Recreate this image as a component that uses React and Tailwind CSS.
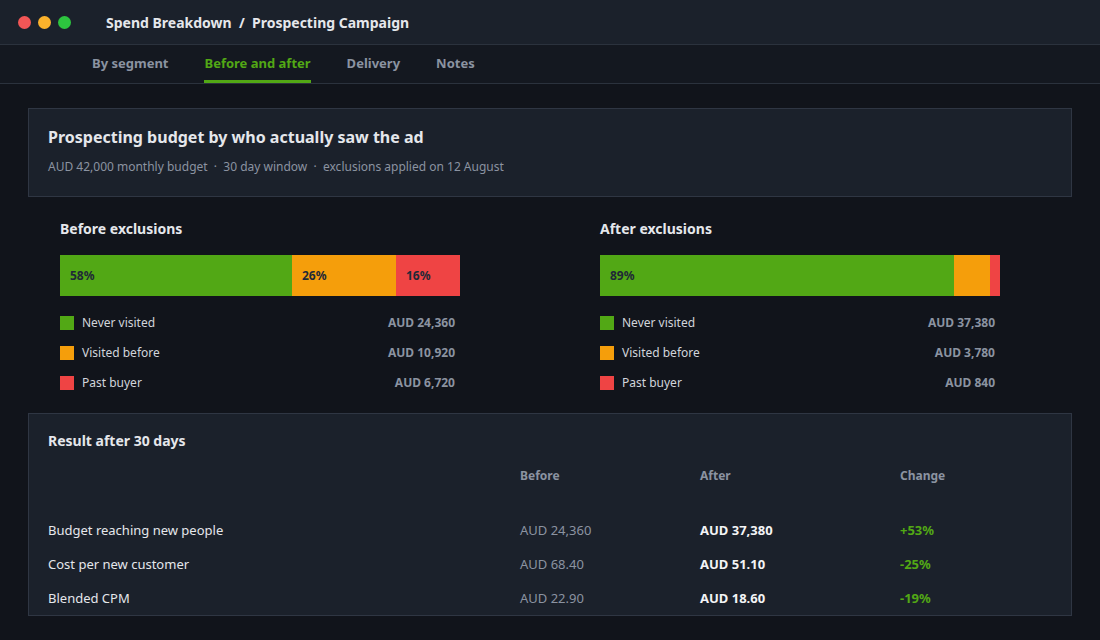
import React from 'react';

const before = [
  { label: 'Never visited', pct: 58, amount: 'AUD 24,360', color: 'bg-[#52a815]' },
  { label: 'Visited before', pct: 26, amount: 'AUD 10,920', color: 'bg-[#f59e0b]' },
  { label: 'Past buyer', pct: 16, amount: 'AUD 6,720', color: 'bg-[#ef4444]' },
];
const after = [
  { label: 'Never visited', pct: 89, amount: 'AUD 37,380', color: 'bg-[#52a815]' },
  { label: 'Visited before', pct: 9, amount: 'AUD 3,780', color: 'bg-[#f59e0b]' },
  { label: 'Past buyer', pct: 2, amount: 'AUD 840', color: 'bg-[#ef4444]' },
];

const rows = [
  ['Budget reaching new people', 'AUD 24,360', 'AUD 37,380', '+53%'],
  ['Cost per new customer', 'AUD 68.40', 'AUD 51.10', '-25%'],
  ['Blended CPM', 'AUD 22.90', 'AUD 18.60', '-19%'],
];

const Breakdown = ({ title, data }) => (
  <div className="w-[400px]">
    <h3 className="text-[14px] font-bold text-[#e5e7eb] leading-none mt-[7px]">{title}</h3>
    <div className="flex h-[41px] mt-[19px]">
      {data.map((d) => (
        <div
          key={d.label}
          className={`${d.color} flex items-center pl-[10px] text-[12px] font-bold text-[#1f2937]`}
          style={{ width: `${d.pct}%` }}
        >
          {d.pct >= 10 ? `${d.pct}%` : ''}
        </div>
      ))}
    </div>
    <div className="mt-[20px] flex flex-col gap-[16px]">
      {data.map((d) => (
        <div key={d.label} className="flex items-center h-[14px] text-[12px]">
          <span className={`${d.color} w-[14px] h-[14px]`} />
          <span className="ml-[8px] text-[#d1d5db]">{d.label}</span>
          <span className="ml-auto mr-[5px] font-bold text-[#8b93a1]">{d.amount}</span>
        </div>
      ))}
    </div>
  </div>
);

const App = () => {
  return (
    <div className="w-[1100px] h-[640px] bg-[#11141b] font-['Liberation_Sans',Arial,sans-serif] overflow-hidden">
      <div className="h-[45px] bg-[#1b212b] border-b border-[#2b323d] flex items-center px-[18px]">
        <div className="flex gap-[7px]">
          <span className="w-[13px] h-[13px] rounded-full bg-[#f25656]" />
          <span className="w-[13px] h-[13px] rounded-full bg-[#fbb22c]" />
          <span className="w-[13px] h-[13px] rounded-full bg-[#2dc43f]" />
        </div>
        <div className="ml-[35px] text-[14px] font-bold text-[#e5e7eb]">Spend Breakdown&nbsp;&nbsp;/&nbsp;&nbsp;Prospecting Campaign</div>
      </div>
      <div className="h-[39px] bg-[#141820] border-b border-[#2b323d] flex pl-[92px] gap-[36px] text-[13px] font-bold">
        <div className="flex items-center text-[#8b93a1]">By segment</div>
        <div className="flex items-center text-[#52a815] border-b-[3px] border-[#52a815] pt-[3px]">Before and after</div>
        <div className="flex items-center text-[#8b93a1]">Delivery</div>
        <div className="flex items-center text-[#8b93a1]">Notes</div>
      </div>

      <div className="px-[28px] pt-[24px]">
        <div className="h-[89px] bg-[#1b212b] border border-[#2f3643] px-[19px] pt-[20px]">
          <h1 className="text-[16px] font-bold text-[#e5e7eb] leading-none">Prospecting budget by who actually saw the ad</h1>
          <p className="mt-[13px] text-[12px] text-[#8b93a1]">
            AUD 42,000 monthly budget&nbsp;&nbsp;·&nbsp;&nbsp;30 day window&nbsp;&nbsp;·&nbsp;&nbsp;exclusions applied on 12 August
          </p>
        </div>

        <div className="flex px-[32px] gap-[140px] pt-[18px] h-[216px]">
          <Breakdown title="Before exclusions" data={before} />
          <Breakdown title="After exclusions" data={after} />
        </div>

        <div className="h-[203px] bg-[#1b212b] border border-[#2f3643] px-[19px] pt-[20px]">
          <h2 className="text-[14px] font-bold text-[#e5e7eb] leading-none">Result after 30 days</h2>
          <div className="grid grid-cols-[472px_180px_200px_1fr] text-[12px] font-bold text-[#8b93a1] mt-[19px]">
            <span />
            <span>Before</span>
            <span>After</span>
            <span>Change</span>
          </div>
          <div className="mt-[38px] flex flex-col gap-[20px]">
            {rows.map((r) => (
              <div key={r[0]} className="grid grid-cols-[472px_180px_200px_1fr] text-[13px] leading-[14px]">
                <span className="text-[#e5e7eb]">{r[0]}</span>
                <span className="text-[#8b93a1]">{r[1]}</span>
                <span className="font-bold text-[#f3f4f6]">{r[2]}</span>
                <span className="font-bold text-[#52a815]">{r[3]}</span>
              </div>
            ))}
          </div>
        </div>
      </div>
    </div>
  );
};

export default App;
